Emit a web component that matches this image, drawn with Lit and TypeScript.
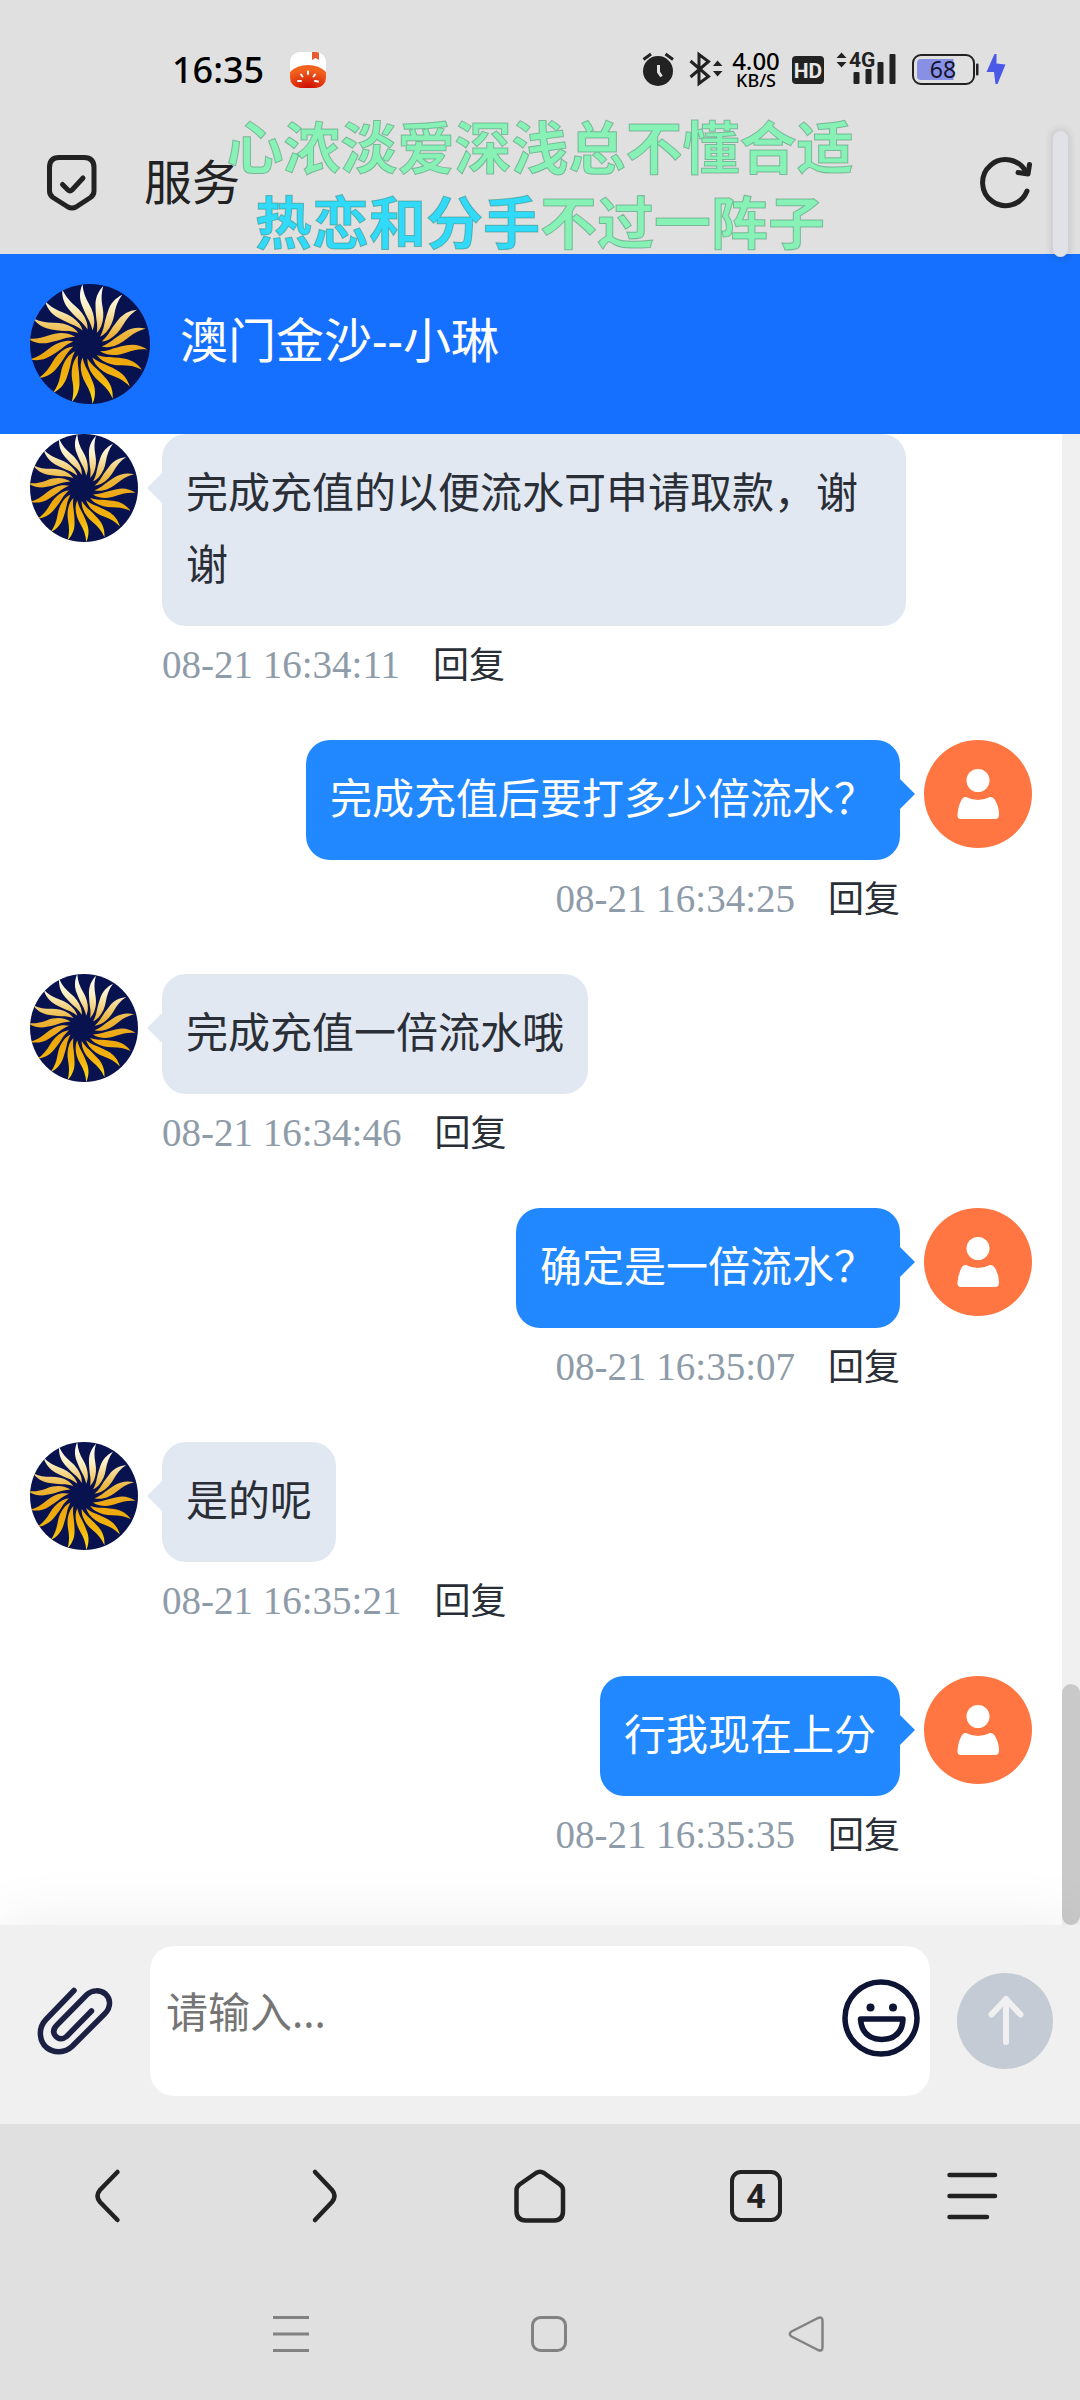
import { LitElement, html, css, svg } from "lit";
import { customElement, property, state } from "lit/decorators.js";
import { classMap } from "lit/directives/class-map.js";

interface Message {
  mine: boolean;
  text: string;
  time: string;
}

const MESSAGES: Message[] = [
  { mine: false, text: "完成充值的以便流水可申请取款，谢谢", time: "08-21 16:34:11" },
  { mine: true, text: "完成充值后要打多少倍流水？", time: "08-21 16:34:25" },
  { mine: false, text: "完成充值一倍流水哦", time: "08-21 16:34:46" },
  { mine: true, text: "确定是一倍流水？", time: "08-21 16:35:07" },
  { mine: false, text: "是的呢", time: "08-21 16:35:21" },
  { mine: true, text: "行我现在上分", time: "08-21 16:35:35" },
];

/** Round avatar with the eighteen-ray golden sun. */
@customElement("sun-avatar")
export class SunAvatar extends LitElement {
  static styles = css`
    :host {
      display: block;
      flex: none;
      border-radius: 50%;
      overflow: hidden;
    }
    .art {
      display: block;
      width: 100%;
      height: 100%;
    }
  `;

  render() {
    const rays = Array.from({ length: 18 }, (_, i) => i * 20);
    return html`
      <svg class="art" viewBox="0 0 120 120" role="img" aria-label="澳门金沙">
        <defs>
          <linearGradient id="gold" x1="0" y1="0" x2="0" y2="1">
            <stop offset="0" stop-color="#ffffff" />
            <stop offset="0.2" stop-color="#fbeec0" />
            <stop offset="0.42" stop-color="#ecb53c" />
            <stop offset="0.6" stop-color="#eda50c" />
            <stop offset="0.8" stop-color="#f3b40c" />
            <stop offset="1" stop-color="#ffe01c" />
          </linearGradient>
          <mask id="rays" maskUnits="userSpaceOnUse" x="0" y="0" width="120" height="120">
            ${rays.map(
              (a) => svg`<path fill="#fff" transform="translate(57.5 60) rotate(${a})"
                d="M-5-60C-4.500-52 -2-46 1.500-40C5-34 7-28 6.800-21Q6.500-17 5-13.500Q4-18 2-22.500C-.5-27 -3-32 -5.500-38.500C-8.500-46 -8-53 -5-60Z"/>`
            )}
          </mask>
        </defs>
        <rect width="120" height="120" fill="#08124f" />
        <rect width="120" height="120" fill="url(#gold)" mask="url(#rays)" />
      </svg>
    `;
  }
}

/** One chat line: avatar, bubble with its pointer, time and reply button. */
@customElement("chat-message")
export class ChatMessage extends LitElement {
  @property({ type: Boolean }) mine = false;
  @property() text = "";
  @property() time = "";

  static styles = css`
    :host {
      display: block;
    }
    .row {
      display: flex;
      gap: 24px;
      padding: 0 156px 0 30px;
    }
    .row.mine {
      flex-direction: row-reverse;
      padding: 0 30px 0 156px;
    }
    .avatar {
      flex: none;
      width: 108px;
      height: 108px;
    }
    .body {
      display: flex;
      flex-direction: column;
      align-items: flex-start;
    }
    .mine .body {
      align-items: flex-end;
    }
    .bubble {
      position: relative;
      margin: 0;
      padding: 22px 24px 26px;
      border-radius: 24px;
      background: #e2e8f1;
      color: #2a2f37;
      font-size: 42px;
      line-height: 72px;
    }
    .mine .bubble {
      background: #2288ff;
      color: #ffffff;
    }
    .bubble::before {
      content: "";
      position: absolute;
      top: 39px;
      left: -15px;
      border: 15px solid transparent;
      border-left: 0;
      border-right-color: #e2e8f1;
    }
    .mine .bubble::before {
      left: auto;
      right: -15px;
      border: 15px solid transparent;
      border-right: 0;
      border-left-color: #2288ff;
    }
    .meta {
      display: flex;
      align-items: baseline;
      gap: 33px;
      padding-top: 12px;
      line-height: 54px;
    }
    .time {
      color: #8e9ba8;
      font-family: "Liberation Serif", serif;
      font-size: 39px;
    }
    .reply {
      padding: 0;
      border: 0;
      background: none;
      color: #2a2f37;
      font: inherit;
      font-size: 36px;
      line-height: 54px;
    }
  `;

  render() {
    return html`
      <div class=${classMap({ row: true, mine: this.mine })}>
        ${this.mine
          ? html`<svg class="avatar" viewBox="0 0 108 108" role="img" aria-label="我">
              <circle cx="54" cy="54" r="54" fill="#ff7642" />
              <circle cx="54" cy="40.500" r="11.500" fill="#fff" />
              <path
                fill="#fff"
                d="M42 57Q54 63 66 57Q69 56.500 71 60Q75 67 75 74.500Q75 79 71 79H37Q33 79 33.500 74.500Q34 66 38 59Q40 56.500 42 57Z"
              />
            </svg>`
          : html`<sun-avatar class="avatar"></sun-avatar>`}
        <div class="body">
          <p class="bubble">${this.text}</p>
          <div class="meta">
            <time class="time">${this.time}</time>
            <button class="reply" type="button">回复</button>
          </div>
        </div>
      </div>
    `;
  }
}

@customElement("status-bar")
export class StatusBar extends LitElement {
  static styles = css`
    :host {
      display: flex;
      justify-content: space-between;
      align-items: center;
      height: 84px;
      padding: 28px 74px 0 172px;
      font-family: "Noto Sans", "Noto Sans CJK SC", sans-serif;
    }
    .group {
      display: flex;
      align-items: center;
      gap: 8px;
    }
    .clock {
      gap: 26px;
      color: #000;
      font-size: 36px;
      font-weight: 500;
      line-height: 40px;
    }
    .icon {
      display: block;
      height: 36px;
      overflow: visible;
    }
    .speed {
      display: flex;
      flex-direction: column;
      align-items: center;
      width: 52px;
      color: #000;
      font-size: 24px;
      font-weight: 500;
      line-height: 20px;
    }
    .unit {
      font-size: 18px;
      line-height: 18px;
    }
    .label {
      font-family: "Liberation Sans Narrow", Roboto, sans-serif;
      font-weight: 700;
    }
  `;

  render() {
    return html`
      <div class="group clock">
        <span>16:35</span>
        <svg class="icon" width="36" viewBox="0 0 36 36" aria-hidden="true">
          <defs>
            <radialGradient id="tomato" cx="0.5" cy="1" r="0.8">
              <stop offset="0" stop-color="#cc0a00" />
              <stop offset="1" stop-color="#f2621f" />
            </radialGradient>
            <clipPath id="tile"><rect width="36" height="36" rx="10" /></clipPath>
          </defs>
          <g clip-path="url(#tile)">
            <rect width="36" height="36" fill="#fff" />
            <path fill="url(#tomato)" d="M0 20Q7 13 18 13Q29 13 36 20V36H0Z" />
            <path fill="#e8592f" d="M22 0H29V8L25.500 6L22 8Z" />
          </g>
          <g stroke="#fff" stroke-width="2" stroke-linecap="round">
            <path d="M18 19.500V22M11 22.500L12.500 24.500M25 22.500L23.500 24.500M8 29H11M25 29L28 29.500" />
          </g>
        </svg>
      </div>
      <div class="group">
        <svg class="icon" width="36" viewBox="0 0 36 36" role="img" aria-label="闹钟">
          <circle cx="16" cy="19" r="15" fill="#222" />
          <path d="M1.500 7.500L9 2M31 7.500L23.500 2" stroke="#222" stroke-width="3" />
          <path d="M16.500 13V20L19.500 24.500" fill="none" stroke="#e0e0e0" stroke-width="3" />
        </svg>
        <svg class="icon" width="36" viewBox="0 0 36 36" role="img" aria-label="蓝牙">
          <path
            d="M4.500 9L22.500 24.500L13 31.500V2.500L22.500 9.500L4.500 25"
            fill="none"
            stroke="#222"
            stroke-width="3"
          />
          <path d="M27 14L31.500 8.500L36.500 14ZM27 19H36.500L31.500 24.500Z" fill="#222" />
        </svg>
        <div class="speed"><span>4.00</span><span class="unit">KB/S</span></div>
        <svg class="icon" width="36" viewBox="0 0 36 36">
          <rect x="2" y="4" width="32" height="28" rx="4" fill="#222" />
          <text class="label" x="18" y="26" text-anchor="middle" font-size="21" fill="#e8e8e8">HD</text>
        </svg>
        <svg class="icon" width="68" viewBox="0 0 68 36">
          <path d="M2.500 6L7.500 0.500L12.500 6ZM2.500 10H12.500L7.500 15.500Z" fill="#222" />
          <text class="label" x="15" y="14.500" font-size="21" fill="#222">4G</text>
          <rect x="19.500" y="20" width="6" height="12" rx="1" fill="#222" />
          <rect x="31.500" y="17" width="6" height="15" rx="1" fill="#222" />
          <rect x="43.500" y="10" width="6" height="22" rx="1" fill="#222" />
          <rect x="55.500" y="2" width="6" height="30" rx="1" fill="#222" />
        </svg>
        <svg class="icon" width="68" viewBox="0 0 68 36">
          <rect x="3" y="3" width="61" height="29" rx="8" fill="none" stroke="#222" stroke-width="2" />
          <path d="M11 7H43.500V28H11Q7 28 7 24V11Q7 7 11 7Z" fill="#8890e6" />
          <rect x="66" y="11.500" width="2.500" height="12" rx="1" fill="#222" />
          <text x="33" y="26" text-anchor="middle" font-size="23" fill="#14142c">68</text>
        </svg>
        <svg class="icon" width="20" viewBox="0 0 20 36" role="img" aria-label="充电中">
          <path d="M8.500 2L0.500 20H8L9.500 32H11.500L19.500 12.500L10.500 11.500V2Z" fill="#4a59e6" />
        </svg>
      </div>
    `;
  }
}

@customElement("app-root")
export class AppRoot extends LitElement {
  @state() private draft = "";

  static styles = css`
    :host {
      display: flex;
      flex-direction: column;
      position: relative;
      min-height: 100vh;
      overflow: hidden;
      background: #fff;
      font-family: "Noto Sans", "Noto Sans CJK SC", sans-serif;
    }
    button {
      display: flex;
      align-items: center;
      justify-content: center;
      padding: 0;
      border: 0;
      background: none;
      color: #222;
      font: inherit;
    }
    svg {
      display: block;
      overflow: visible;
    }
    .chrome {
      position: relative;
      background: #e0e0e0;
    }
    .browser {
      display: flex;
      align-items: center;
      height: 140px;
      padding: 0 48px 2px 46px;
    }
    .site {
      flex: 1;
      padding-left: 46px;
      color: #222;
      font-size: 48px;
      line-height: 64px;
    }
    .lyrics {
      position: absolute;
      top: 110px;
      left: 0;
      right: 0;
      margin: 0;
      color: #88f1b6;
      font-size: 57px;
      font-weight: 700;
      line-height: 75px;
      text-align: center;
      -webkit-text-stroke: 1px rgba(40, 110, 80, 0.4);
      pointer-events: none;
    }
    .sung {
      color: #30daf8;
    }
    .handle {
      position: absolute;
      z-index: 2;
      top: 131px;
      right: 12px;
      width: 15px;
      height: 126px;
      border-radius: 8px;
      background: #e1e1e8;
      box-shadow: 0 0 6px 3px rgba(0, 0, 0, 0.09);
    }
    .peer {
      display: flex;
      align-items: center;
      gap: 30px;
      padding: 30px;
      background: #1570ff;
      color: #fff;
    }
    .portrait {
      width: 120px;
      height: 120px;
    }
    .name {
      margin: 0;
      padding-bottom: 8px;
      font-size: 48px;
      font-weight: 400;
      line-height: 64px;
    }
    .chat {
      flex: 1;
      display: flex;
    }
    .messages {
      flex: 1;
      display: flex;
      flex-direction: column;
      gap: 48px;
      margin: 0;
      padding: 0 0 48px;
      list-style: none;
    }
    .track {
      display: flex;
      flex-direction: column;
      justify-content: flex-end;
      width: 18px;
      background: #f0f0f0;
    }
    .thumb {
      height: 16%;
      min-height: 241px;
      border-radius: 9px;
      background: #c9c9c9;
    }
    .composer {
      position: relative;
      display: flex;
      align-items: center;
      padding: 21px 27px 28px 0;
      background: #f0f0f0;
      box-shadow: 0 0 60px rgba(0, 0, 0, 0.08);
    }
    .attach {
      width: 150px;
    }
    .field {
      flex: 1;
      display: flex;
      align-items: center;
      min-width: 0;
      height: 150px;
      margin-right: 27px;
      padding-right: 10px;
      border-radius: 24px;
      background: #fff;
    }
    .emoji {
      padding-bottom: 6px;
    }
    .entry {
      flex: 1;
      min-width: 0;
      height: 150px;
      box-sizing: border-box;
      margin: 0;
      padding: 36px 0 36px 16px;
      border: 0;
      outline: 0;
      resize: none;
      overflow: hidden;
      background: none;
      color: #222;
      font: inherit;
      font-size: 42px;
      line-height: 60px;
    }
    .entry::placeholder {
      color: #757575;
      opacity: 1;
    }
    .send {
      width: 96px;
      height: 96px;
      border-radius: 50%;
      background: #c5cbd4;
    }
    .tools {
      position: relative;
      display: grid;
      grid-template-columns: repeat(5, 1fr);
      height: 144px;
      background: #e0e0e0;
    }
    .tabs {
      box-sizing: border-box;
      width: 52px;
      height: 52px;
      border: 4px solid #222;
      border-radius: 11px;
      font-family: "Liberation Sans Narrow", Roboto, sans-serif;
      font-size: 34px;
      font-weight: 700;
      line-height: 44px;
      text-align: center;
    }
    .system {
      position: relative;
      display: grid;
      grid-template-columns: repeat(3, 1fr);
      height: 132px;
      padding: 0 144px 0 162px;
      background: #e0e0e0;
    }
  `;

  private onInput(e: Event) {
    this.draft = (e.target as HTMLTextAreaElement).value;
  }

  render() {
    return html`
      <header class="chrome">
        <status-bar></status-bar>
        <div class="browser">
          <svg width="52" height="56" viewBox="0 0 52 56" fill="none" stroke="#222" stroke-width="5" stroke-linecap="round" stroke-linejoin="round" role="img" aria-label="安全">
            <path d="M13 3.500H38Q48 3.500 48 13.500V37Q48 41 44.500 43.500L30 53Q26 55 22 53L7 43.500Q3.500 41 3.500 37V13.500Q3.500 3.500 13 3.500Z" />
            <path d="M16.500 30.500L22 36Q24 38 26 36L37 24" />
          </svg>
          <span class="site">服务</span>
          <button type="button" aria-label="刷新">
            <svg width="52" height="52" viewBox="0 0 52 52" fill="none" stroke="#222" stroke-width="5" stroke-linecap="round" stroke-linejoin="round">
              <path d="M47 35A23 23 0 1 1 46 16" />
              <path d="M49.500 8.500L48 18L38 16.500" />
            </svg>
          </button>
        </div>
        <p class="lyrics">
          心浓淡爱深浅总不懂合适<br /><span class="sung">热恋和分手</span>不过一阵子
        </p>
        <div class="handle"></div>
      </header>

      <section class="peer">
        <sun-avatar class="portrait"></sun-avatar>
        <h1 class="name">澳门金沙--小琳</h1>
      </section>

      <main class="chat">
        <ul class="messages">
          ${MESSAGES.map(
            (m) => html`<li>
              <chat-message ?mine=${m.mine} .text=${m.text} .time=${m.time}></chat-message>
            </li>`
          )}
        </ul>
        <div class="track"><div class="thumb"></div></div>
      </main>

      <form class="composer" @submit=${(e: Event) => e.preventDefault()}>
        <button class="attach" type="button" aria-label="添加附件">
          <svg width="76" height="68" viewBox="0 0 76 68" fill="none" stroke="#1c2144" stroke-width="5.500" stroke-linecap="round" stroke-linejoin="round">
            <path d="M37 3.500L9 32.500C0 42 3 55 9.500 60.500C17 66.500 28 66 35 59.500L68 26.500C74 20 74 12 68.500 7C63 2.500 55 3 50 7.500L20 38C16 42 16 46 18.500 49C21.500 52.500 26 52.500 29.500 49.500L54.500 24" />
          </svg>
        </button>
        <div class="field">
          <textarea
            class="entry"
            aria-label="消息"
            placeholder="请输入..."
            .value=${this.draft}
            @input=${this.onInput}
          ></textarea>
          <button class="emoji" type="button" aria-label="表情">
            <svg width="78" height="78" viewBox="0 0 78 78" fill="none" stroke="#0e1434" stroke-width="5.500" stroke-linejoin="round">
              <circle cx="39" cy="39" r="36" />
              <path d="M18.500 40H61Q60 60 39.700 60.500Q20 60 18.500 40Z" />
              <circle cx="28.500" cy="28.500" r="4" fill="#0e1434" stroke="none" />
              <circle cx="51" cy="28.500" r="4" fill="#0e1434" stroke="none" />
            </svg>
          </button>
        </div>
        <button class="send" type="submit" aria-label="发送">
          <svg width="96" height="96" viewBox="0 0 96 96" fill="none" stroke="#f0f0f0" stroke-width="6" stroke-linecap="round" stroke-linejoin="round">
            <path d="M49 69V26M34.500 41.500L49 26L63.500 41.500" />
          </svg>
        </button>
      </form>

      <nav class="tools" aria-label="浏览器">
        <button type="button" aria-label="后退">
          <svg width="54" height="54" viewBox="0 0 54 54" fill="none" stroke="#222" stroke-width="4.500" stroke-linecap="round">
            <path d="M36.500 3L19 21Q14 27 19 33L36.500 51" />
          </svg>
        </button>
        <button type="button" aria-label="前进">
          <svg width="54" height="54" viewBox="0 0 54 54" fill="none" stroke="#222" stroke-width="4.500" stroke-linecap="round">
            <path d="M18 3L35 21Q40 27 35 33L18 51" />
          </svg>
        </button>
        <button type="button" aria-label="主页">
          <svg width="54" height="54" viewBox="0 0 54 54" fill="none" stroke="#222" stroke-width="4.500" stroke-linejoin="round">
            <path d="M23 4Q27 1.500 31 4L47 15.500Q50 18 50 21V42Q50 51.500 41 51.500H13Q3.500 51.500 3.500 42V21Q3.500 18 6.500 15.500Z" />
          </svg>
        </button>
        <button type="button" aria-label="标签页"><span class="tabs">4</span></button>
        <button type="button" aria-label="菜单">
          <svg width="54" height="54" viewBox="0 0 54 54" fill="none" stroke="#222" stroke-width="4.500" stroke-linecap="round">
            <path d="M4.500 6H50M4.500 27H50M4.500 48H42" />
          </svg>
        </button>
      </nav>

      <nav class="system" aria-label="系统">
        <button type="button" aria-label="最近任务">
          <svg width="36" height="36" viewBox="0 0 36 36" fill="none" stroke="#828282" stroke-width="3">
            <path d="M0 1.500H36M0 18H36M0 34.500H36" />
          </svg>
        </button>
        <button type="button" aria-label="主屏幕">
          <svg width="36" height="36" viewBox="0 0 36 36" fill="none" stroke="#828282" stroke-width="3">
            <rect x="1.500" y="1.500" width="33" height="33" rx="8" />
          </svg>
        </button>
        <button type="button" aria-label="返回">
          <svg width="36" height="36" viewBox="0 0 36 36" fill="none" stroke="#828282" stroke-width="2.500" stroke-linejoin="round">
            <path d="M2.500 15.500L29 2Q33.500 0 33.500 5V31Q33.500 36 29 34L2.500 20.500Q-1 18 2.500 15.500Z" />
          </svg>
        </button>
      </nav>
    `;
  }
}
